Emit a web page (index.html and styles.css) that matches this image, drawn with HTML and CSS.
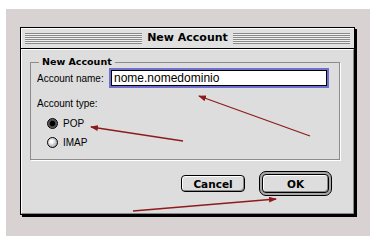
FILE: index.html
```html
<!DOCTYPE html>
<html lang="en">
<head>
  <meta charset="UTF-8" />
  <title>New Account</title>
  <link rel="stylesheet" href="styles.css">
</head>
<body>
  <div class="frame">
    <div class="window">
      <div class="titlebar">
        <span class="stripes"></span>
        <span class="title">New Account</span>
        <span class="stripes"></span>
      </div>
      <div class="content">
        <fieldset class="group">
          <legend>New Account</legend>
          <div class="field-row">
            <label class="label">Account name:</label>
            <div class="input">nome.nomedominio</div>
          </div>
          <div class="type-label">Account type:</div>
          <div class="radio-row first"><span class="radio checked"></span>POP</div>
          <div class="radio-row"><span class="radio"></span>IMAP</div>
        </fieldset>
        <div class="buttons">
          <button class="btn cancel">Cancel</button>
          <div class="default-ring"><button class="btn ok">OK</button></div>
        </div>
      </div>
    </div>
  </div>

  <!-- annotation arrows drawn over the screenshot -->
  <svg class="arrows" width="376" height="245" viewBox="0 0 376 245">
    <defs>
      <marker id="head" markerWidth="8" markerHeight="6" refX="7" refY="3" orient="auto" markerUnits="userSpaceOnUse">
        <path d="M0,0 L8,3 L0,6 Z" fill="#8e1b1b"/>
      </marker>
    </defs>
    <line x1="310" y1="136" x2="199" y2="96" stroke="#8e1b1b" stroke-width="1.3" marker-end="url(#head)"/>
    <line x1="183" y1="141" x2="91" y2="127" stroke="#8e1b1b" stroke-width="1.3" marker-end="url(#head)"/>
    <line x1="133" y1="211" x2="276" y2="199" stroke="#8e1b1b" stroke-width="1.3" marker-end="url(#head)"/>
  </svg>
</body>
</html>
```

FILE: styles.css
```css
* { box-sizing:border-box; }
body {
  margin:0; background:#fff;
  position:relative; width:376px; height:245px;
  font-family:'Liberation Sans',sans-serif;
  color:#000;
}
.frame {
  margin:9px 0 0 6px;
  width:364px; height:227px;
  background:#d9d2d2;
  padding:18px 0 0 14px;
}
.window {
  width:335px;
  background:#dddddd;
  border:1px solid #000;
  box-shadow:2px 2px 0 #000;
}
.titlebar {
  height:21px;
  border-bottom:1px solid #000;
  display:flex; align-items:center;
  padding:0 4px;
  background:#e0e0e0;
  box-shadow:inset 1px 1px 0 #fff;
}
.stripes {
  flex:1; height:11px;
  background:repeating-linear-gradient(to bottom, #8a8a8a 0 1px, #eeeeee 1px 2px);
}
.title {
  font-family:'DejaVu Sans',sans-serif;
  font-weight:700; font-size:11px;
  padding:0 5px; line-height:14px;
}
.content {
  border-top:1px solid #fff; border-left:1px solid #fff;
  border-right:1px solid #888; border-bottom:1px solid #888;
  padding:6px 13px 17px 8px;
}
.group {
  margin:0; min-width:0;
  border:1px solid #8c8c8c;
  box-shadow:1px 1px 0 #fff;
  padding:0 6px 11px 6px;
}
.group legend {
  font-family:'DejaVu Sans',sans-serif;
  font-weight:700; font-size:9.5px;
  line-height:12px;
  padding:0 3px; margin-left:2px;
}
.field-row {
  display:flex; align-items:center;
  height:20px;
}
.label {
  width:72px; flex:none;
  font-size:10px;
}
.input {
  width:220px; height:20px;
  border:2px solid #6f6fcf;
  box-shadow:inset 0 0 0 1px #000;
  background:#fff;
  font-size:12px; line-height:16px;
  padding-left:3px;
}
.type-label {
  margin-top:10px;
  font-size:10px; line-height:11px;
}
.radio-row {
  display:flex; align-items:center; gap:5px;
  height:12px; margin-top:7px;
  padding-left:10px;
  font-size:10px;
}
.radio-row.first { margin-top:8px; }
.radio {
  width:11px; height:11px; border-radius:50%;
  border:1px solid #000;
  background:radial-gradient(circle at 40% 40%, #fff 0 15%, #c4c4c4 55%, #7f7f7f 100%);
}
.radio.checked {
  background:radial-gradient(circle, #000 0 2.5px, #444 3px, #8f8f8f 100%);
}
.buttons {
  display:flex; justify-content:flex-end; align-items:center;
  gap:14px;
  margin-top:11px; padding-right:8px;
  height:25px;
}
.btn {
  font-family:'DejaVu Sans',sans-serif;
  font-weight:700; font-size:10.5px;
  color:#000;
  background:#dddddd;
  border:1px solid #000; border-radius:4px;
  box-shadow:inset 1px 1px 0 #fff, inset -1px -1px 0 #888;
  padding:0;
}
.cancel { width:64px; height:17px; }
.default-ring {
  border:1px solid #000; border-radius:7px;
  padding:2px; background:#a8a8a8;
}
.ok { width:67px; height:19px; display:block; }
.arrows {
  position:absolute; top:0; left:0;
  pointer-events:none;
}
```
